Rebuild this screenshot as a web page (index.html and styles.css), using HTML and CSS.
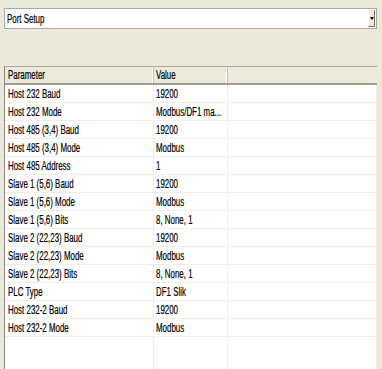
FILE: index.html
```html
<!DOCTYPE html>
<html lang="en">
<head>
    <meta charset="UTF-8">
    <title>Port Setup</title>
    <link rel="stylesheet" href="styles.css">
</head>
<body>
    <div class="page">
        <div class="combo">
            <span class="combo-text"><span class="t">Port Setup</span></span>
            <span class="combo-btn"><span class="arrow"></span></span>
        </div>

        <div class="list">
            <div class="row head">
                <div class="cell"><span class="t">Parameter</span></div>
                <div class="cell"><span class="t">Value</span></div>
                <div class="cell"></div>
            </div>
            <div class="row"><div class="cell"><span class="t">Host 232 Baud</span></div><div class="cell"><span class="t">19200</span></div><div class="cell"></div></div>
            <div class="row"><div class="cell"><span class="t">Host 232 Mode</span></div><div class="cell"><span class="t">Modbus/DF1 ma...</span></div><div class="cell"></div></div>
            <div class="row"><div class="cell"><span class="t">Host 485 (3,4) Baud</span></div><div class="cell"><span class="t">19200</span></div><div class="cell"></div></div>
            <div class="row"><div class="cell"><span class="t">Host 485 (3,4) Mode</span></div><div class="cell"><span class="t">Modbus</span></div><div class="cell"></div></div>
            <div class="row"><div class="cell"><span class="t">Host 485 Address</span></div><div class="cell"><span class="t">1</span></div><div class="cell"></div></div>
            <div class="row"><div class="cell"><span class="t">Slave 1 (5,6) Baud</span></div><div class="cell"><span class="t">19200</span></div><div class="cell"></div></div>
            <div class="row"><div class="cell"><span class="t">Slave 1 (5,6) Mode</span></div><div class="cell"><span class="t">Modbus</span></div><div class="cell"></div></div>
            <div class="row"><div class="cell"><span class="t">Slave 1 (5,6) Bits</span></div><div class="cell"><span class="t">8, None, 1</span></div><div class="cell"></div></div>
            <div class="row"><div class="cell"><span class="t">Slave 2 (22,23) Baud</span></div><div class="cell"><span class="t">19200</span></div><div class="cell"></div></div>
            <div class="row"><div class="cell"><span class="t">Slave 2 (22,23) Mode</span></div><div class="cell"><span class="t">Modbus</span></div><div class="cell"></div></div>
            <div class="row"><div class="cell"><span class="t">Slave 2 (22,23) Bits</span></div><div class="cell"><span class="t">8, None, 1</span></div><div class="cell"></div></div>
            <div class="row"><div class="cell"><span class="t">PLC Type</span></div><div class="cell"><span class="t">DF1 Slik</span></div><div class="cell"></div></div>
            <div class="row"><div class="cell"><span class="t">Host 232-2 Baud</span></div><div class="cell"><span class="t">19200</span></div><div class="cell"></div></div>
            <div class="row"><div class="cell"><span class="t">Host 232-2 Mode</span></div><div class="cell"><span class="t">Modbus</span></div><div class="cell"></div></div>
            <div class="row filler"><div class="cell"></div><div class="cell"></div><div class="cell"></div></div>
        </div>
    </div>
</body>
</html>
```

FILE: styles.css
```css
/* XP style property list */
body {
    margin: 0;
    background-color: #ece9d8; /* classic dialog beige */
    font-family: "Liberation Sans", Arial, sans-serif;
    font-size: 12px;
    color: #000000;
    height: 369px;
    overflow: hidden;
}

.page {
    padding: 8px 5px 0 4px;
}

/* squeezes glyphs the way the captured screen does */
.t {
    display: inline-block;
    white-space: nowrap;
    transform: scaleX(0.66);
    transform-origin: left center;
    -webkit-text-stroke: 0.2px #000000;
}

.combo {
    display: flex;
    height: 21px;
    background-color: #ffffff;
    border: 1px solid #a7a6aa;
    box-sizing: border-box;
}

.combo-text {
    flex: 1;
    display: flex;
    align-items: center;
    padding-left: 2px;
}

.combo-btn {
    width: 5px;
    margin: 1px;
    background-color: #ece9d8;
    border-left: 1px solid #ffffff;
    border-right: 1px solid #716f64;
    border-bottom: 1px solid #716f64;
    display: flex;
    align-items: center;
    justify-content: center;
}

.arrow {
    width: 0;
    height: 0;
    border-left: 2px solid transparent;
    border-right: 2px solid transparent;
    border-top: 3px solid #000000;
}

.list {
    margin-top: 37px;
    background-color: #ffffff;
    border-left: 1px solid #828790;
    height: 303px;
    display: flex;
    flex-direction: column;
}

.row {
    display: grid;
    grid-template-columns: 149px 74px 149px;
    height: 18px;
    border-bottom: 1px solid #f1efe2;
    box-sizing: border-box;
}

.cell {
    display: flex;
    align-items: center;
    padding-left: 3px;
    border-right: 1px solid #f1efe2;
    overflow: hidden;
}

.row .cell:nth-child(2) {
    padding-left: 2px;
}

.head {
    height: 19px;
    background-color: #ebeadb;
    border-top: 1px solid #aca899;
    border-bottom: 2px solid #a19e8c;
}

.head .cell {
    border-right: 1px solid #c7c5b2;
    box-shadow: inset -1px 0 0 #ffffff;
}

.head .cell:last-child {
    border-right: none;
    box-shadow: none;
}

.filler {
    flex: 1;
    border-bottom: none;
}
```
